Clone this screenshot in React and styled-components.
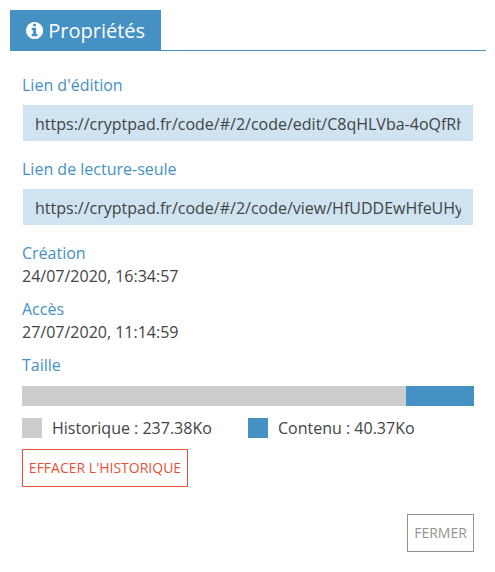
import React from "react";
import styled, { createGlobalStyle } from "styled-components";

const Global = createGlobalStyle`
  * { box-sizing: border-box; }
  body {
    margin: 0;
    background: #fff;
    color: #424445;
    font: 16px/23px "Open Sans", sans-serif;
  }
`;

const Dialog = styled.main`
  width: 495px;
  height: 572px;
  padding: 10px 9px 0 10px;
`;

const TabBar = styled.nav`
  display: flex;
  height: 41px;
  border-bottom: 1px solid #4591c4;
`;

const Tab = styled.div`
  display: flex;
  align-items: center;
  gap: 5.2px;
  width: 151px;
  height: 41px;
  padding-left: 16px;
  background: #4591c4;
  color: #fff;
  font-size: 20px;
  white-space: nowrap;
`;

const InfoIcon = styled.svg`
  width: 17.14px;
  height: 17.14px;
  fill: currentColor;
`;

const Content = styled.section`
  display: flex;
  flex-direction: column;
  align-items: flex-start;
  padding: 23px 12px 0;
`;

const Label = styled.div`
  color: #4591c4;
`;

const Field = styled.div`
  display: flex;
  flex-direction: column;
  width: 100%;
  margin-bottom: ${(p) => p.$gap}px;
`;

const LinkInput = styled.input`
  width: 450px;
  height: 36px;
  margin: 8px 1px 0;
  padding: 2px 12px 0;
  border: 0;
  border-radius: 0;
  outline: none;
  background: #d0e3f0;
  color: #424445;
  font: 16px "Open Sans", sans-serif;
`;

const UsageBar = styled.div`
  display: grid;
  grid-template-columns: 384px 68px;
  width: 452px;
  height: 20px;
`;

const Segment = styled.span`
  background: ${(p) => p.$color};
`;

const Legend = styled.div`
  display: grid;
  grid-template-columns: 226px 226px;
  margin-top: 11px;
`;

const LegendItem = styled.div`
  display: flex;
  align-items: flex-start;
  gap: 10px;
`;

const Swatch = styled.span`
  width: 20px;
  height: 20px;
  margin-top: 1px;
  background: ${(p) => p.$color};
`;

const Button = styled.button`
  height: 38px;
  width: ${(p) => p.$width}px;
  padding: 0 0 2px;
  border: 1px solid ${(p) => p.$color};
  background: transparent;
  color: ${(p) => p.$color};
  font: 14px "Open Sans", sans-serif;
  text-transform: uppercase;
  white-space: nowrap;
`;

const HistoryAction = styled.div`
  display: flex;
  margin-top: 9px;
`;

const Footer = styled.footer`
  display: flex;
  justify-content: flex-end;
  padding: 27px 12px 0;
`;

export default function App() {
  return (
    <>
      <Global />
      <Dialog>
        <TabBar>
          <Tab>
            <InfoIcon viewBox="0 0 1536 1536" aria-hidden="true">
              <path d="M1024 1248v-160q0-14-9-23t-23-9h-96V544q0-14-9-23t-23-9H544q-14 0-23 9t-9 23v160q0 14 9 23t23 9h96v320h-96q-14 0-23 9t-9 23v160q0 14 9 23t23 9h448q14 0 23-9t9-23zM896 352V192q0-14-9-23t-23-9H672q-14 0-23 9t-9 23v160q0 14 9 23t23 9h192q14 0 23-9t9-23zm640 416q0 209-103 385.500T1153.500 1433 768 1536t-385.500-103T103 1153.500 0 768t103-385.500T382.500 103 768 0t385.500 103T1433 382.500 1536 768z" />
            </InfoIcon>
            Propriétés
          </Tab>
        </TabBar>
        <Content>
          <Field $gap={17}>
            <Label>Lien d'édition</Label>
            <LinkInput readOnly value="https://cryptpad.fr/code/#/2/code/edit/C8qHLVba-4oQfRh" />
          </Field>
          <Field $gap={17}>
            <Label>Lien de lecture-seule</Label>
            <LinkInput readOnly value="https://cryptpad.fr/code/#/2/code/view/HfUDDEwHfeUHyk" />
          </Field>
          <Field $gap={10}>
            <Label>Création</Label>
            <span>24/07/2020, 16:34:57</span>
          </Field>
          <Field $gap={10}>
            <Label>Accès</Label>
            <span>27/07/2020, 11:14:59</span>
          </Field>
          <Field $gap={9}>
            <Label>Taille</Label>
          </Field>
          <UsageBar>
            <Segment $color="#cccccc" />
            <Segment $color="#4591c4" />
          </UsageBar>
          <Legend>
            <LegendItem><Swatch $color="#cccccc" />Historique : 237.38Ko</LegendItem>
            <LegendItem><Swatch $color="#4591c4" />Contenu : 40.37Ko</LegendItem>
          </Legend>
          <HistoryAction>
            <Button $width={166} $color="#e55236">Effacer l'historique</Button>
          </HistoryAction>
        </Content>
        <Footer>
          <Button $width={67} $color="#939393">Fermer</Button>
        </Footer>
      </Dialog>
    </>
  );
}
